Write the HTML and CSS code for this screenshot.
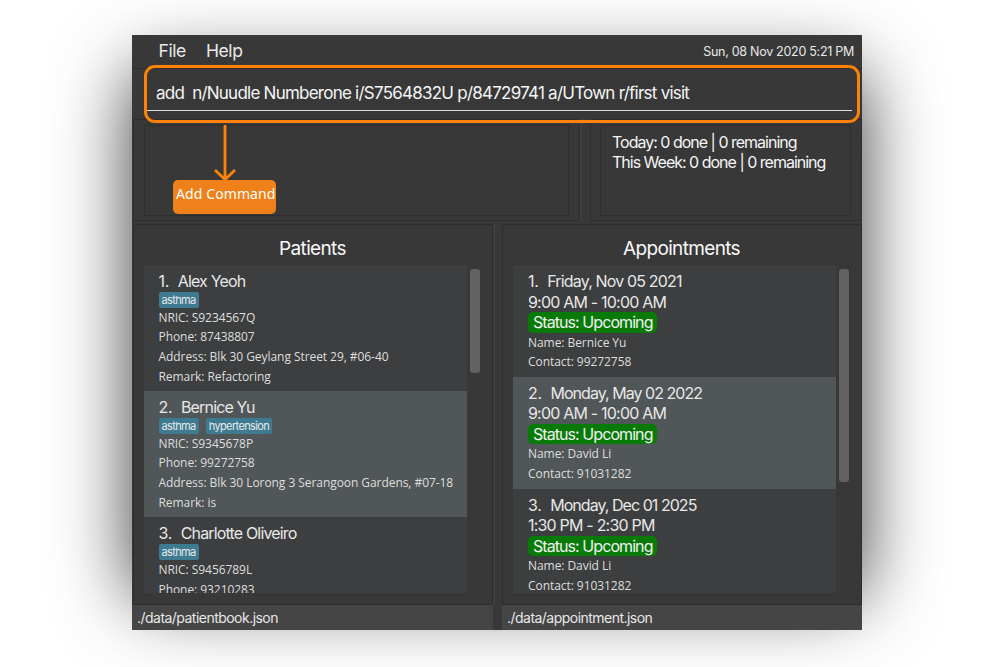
FILE: index.html
```html
<!DOCTYPE html>
<html lang="en">
<head>
<meta charset="utf-8">
<title>Nuudle</title>
<link rel="stylesheet" href="styles.css">
</head>
<body>
<main class="window">
  <header class="menubar">
    <nav class="menus"><span class="file">File</span><span class="help">Help</span></nav>
    <span class="clock">Sun, 08 Nov 2020 5:21 PM</span>
  </header>
  <section class="command"><div class="field"><span class="typed">add&nbsp; n/Nuudle Numberone i/S7564832U p/84729741 a/UTown r/first visit</span></div></section>
  <section class="results">
    <div class="frame"><div class="box"></div></div>
    <div class="gutter"></div>
    <div class="frame"><div class="box summary"><span class="today">Today: 0 done | 0 remaining</span><span class="week">This Week: 0 done | 0 remaining</span></div></div>
  </section>
  <section class="panels">
    <div class="panel">
      <h2><span class="t-pat">Patients</span></h2>
      <div class="scroller">
        <div class="list">
          <article class="patient">
            <h3><b>1.</b><span class="n1">Alex Yeoh</span></h3>
            <div class="tags"><span class="tag">asthma</span></div>
            <p>NRIC: S9234567Q</p><p>Phone: 87438807</p><p>Address: Blk 30 Geylang Street 29, #06-40</p><p>Remark: Refactoring</p>
          </article>
          <article class="patient alt">
            <h3><b>2.</b><span class="n2">Bernice Yu</span></h3>
            <div class="tags"><span class="tag">asthma</span><span class="tag">hypertension</span></div>
            <p>NRIC: S9345678P</p><p>Phone: 99272758</p><p>Address: Blk 30 Lorong 3 Serangoon Gardens, #07-18</p><p>Remark: is</p>
          </article>
          <article class="patient">
            <h3><b>3.</b><span class="n3">Charlotte Oliveiro</span></h3>
            <div class="tags"><span class="tag">asthma</span></div>
            <p>NRIC: S9456789L</p><p>Phone: 93210283</p>
          </article>
        </div>
        <div class="bar"></div>
      </div>
    </div>
    <div class="gutter"></div>
    <div class="panel">
      <h2><span class="t-app">Appointments</span></h2>
      <div class="scroller">
        <div class="list">
          <article class="appt">
            <h3><b>1.</b><span>Friday, Nov 05 2021</span></h3>
            <h4>9:00 AM - 10:00 AM</h4>
            <span class="status">Status: Upcoming</span>
            <p>Name: Bernice Yu</p><p>Contact: 99272758</p>
          </article>
          <article class="appt alt">
            <h3><b>2.</b><span class="tight">Monday, May 02 2022</span></h3>
            <h4>9:00 AM - 10:00 AM</h4>
            <span class="status">Status: Upcoming</span>
            <p>Name: David Li</p><p>Contact: 91031282</p>
          </article>
          <article class="appt">
            <h3><b>3.</b><span class="tight">Monday, Dec 01 2025</span></h3>
            <h4>1:30 PM - 2:30 PM</h4>
            <span class="status">Status: Upcoming</span>
            <p>Name: David Li</p><p>Contact: 91031282</p>
          </article>
        </div>
        <div class="bar long"></div>
      </div>
    </div>
  </section>
  <footer class="statusbar"><span>./data/patientbook.json</span><i></i><span>./data/appointment.json</span></footer>

  <div class="highlight"></div>
  <svg class="arrow" width="26" height="57" viewBox="0 0 26 57" fill="none" stroke="#ff8205" stroke-width="2.8"><path d="M13 0V55M3 45l10 9.500 10-9.500" stroke-linecap="butt"/></svg>
  <div class="callout">Add Command</div>
</main>
</body>
</html>
```
FILE: styles.css
```css
* { box-sizing: border-box; }
body { margin: 0; background: #fff; font-family: Inter, "Liberation Sans", sans-serif; color: #e8e8e8; height: 667px; overflow: hidden; }
.window {
  position: relative; z-index: 0; width: 730px; height: 595px; margin: 35px 0 0 132px;
  display: grid; grid-template-rows: 34px 50px 105px 381px 25px; white-space: nowrap;
}
.window::before { content: ""; position: absolute; z-index: -2; inset: 35px 0 31px; border-radius: 20px; box-shadow: 0 0 76px rgba(0,0,0,.78); }
.window::after { content: ""; position: absolute; z-index: -1; inset: 0; background: #383838; }
h2, h3, h4, p { margin: 0; font-weight: 400; }

.menubar { display: flex; justify-content: space-between; padding: 0 8px 0 26.5px; line-height: 32px; border-bottom: 1px solid #2e2e2e; }
.menus { display: flex; gap: 20px; font-size: 17.5px; letter-spacing: -.4px; }
.clock { font-size: 12.5px; letter-spacing: -.28px; line-height: 33px; }

.command { padding: 0 10px 0 14px; }
.field { height: 42px; padding-left: 10px; border-bottom: 1px solid #ddd; line-height: 48px; font-size: 17px; letter-spacing: -.76px; color: #f5f5f5; }

.results { display: grid; grid-template-columns: 447px 10px 272px; padding: 0 0 3px 1px; }
.frame { border: 1px solid #2d2d2d; border-right-color: #303030; padding: 5px 10px 4px 10px; }
.frame:last-child { padding-left: 9px; }
.box { height: 91px; border: 1px solid #2e2e2e; }
.gutter { border-left: 2px solid #404040; }
.summary { display: flex; flex-direction: column; padding: 6px 0 0 11px; font-size: 16px; line-height: 20.5px; letter-spacing: -1px; color: #f5f5f5; }
.week { margin-top: -.6px; }

.panels { display: grid; grid-template-columns: 360px 9px 360px; padding-left: 1px; }
.panel { border: 1px solid #2d2d2d; padding: 0 0 0 10px; }
h2 { height: 40px; width: 337px; text-align: center; font-size: 19px; line-height: 48px; letter-spacing: -.65px; color: #f8f8f8; }
.scroller { display: flex; gap: 3px; height: 328px; }
.list { width: 323px; height: 328px; overflow: hidden; background: #3c3e3f; }
.bar { width: 10px; height: 104px; margin-top: 4px; border-radius: 3px; background: #626262; }
.bar.long { height: 213px; }
article { padding: 6px 0 0 15px; }
.patient { height: 126.2px; padding-left: 14.5px; }
.appt { height: 111.8px; }
.alt { background: #515658; }
h3 { display: flex; height: 20.5px; font-size: 16px; line-height: 21px; letter-spacing: -.84px; }
h3 b { font-weight: 400; margin-right: 8.5px; letter-spacing: -.2px; }
.tight { letter-spacing: -.96px; }
h4 { height: 20.5px; font-size: 16px; line-height: 20px; letter-spacing: -.8px; }
.tags { display: flex; gap: 7px; height: 16px; }
.tag { height: 16px; padding: 0 3px; border-radius: 2px; background: #3e7b91; font-size: 11px; line-height: 16px; letter-spacing: -.62px; }
p { height: 19.75px; font-family: "Open Sans", "Noto Sans", sans-serif; font-size: 12px; line-height: 20px; letter-spacing: -.06px; color: #dedede; }
.status { display: block; width: 129px; height: 20.5px; padding-left: 5px; border-radius: 5px; background: #087a08; font-size: 16px; line-height: 21px; letter-spacing: -.93px; color: #f2f2f2; }

.statusbar { display: grid; grid-template-columns: 361px 9px 360px; line-height: 25px; font-size: 14px; letter-spacing: -.53px; }
.statusbar span { padding-left: 5px; background: #454545; }

.highlight { position: absolute; left: 11.5px; top: 29.5px; width: 716px; height: 58px; border: 3px solid #ff8205; border-radius: 11px; }
.arrow { position: absolute; left: 80px; top: 90px; }
.callout { position: absolute; left: 41px; top: 145px; width: 103px; height: 34px; padding-left: 3px; border-radius: 5px; background: #f08019; color: #fff; font: 14px/28px "Noto Sans", sans-serif; letter-spacing: .1px; }
```
